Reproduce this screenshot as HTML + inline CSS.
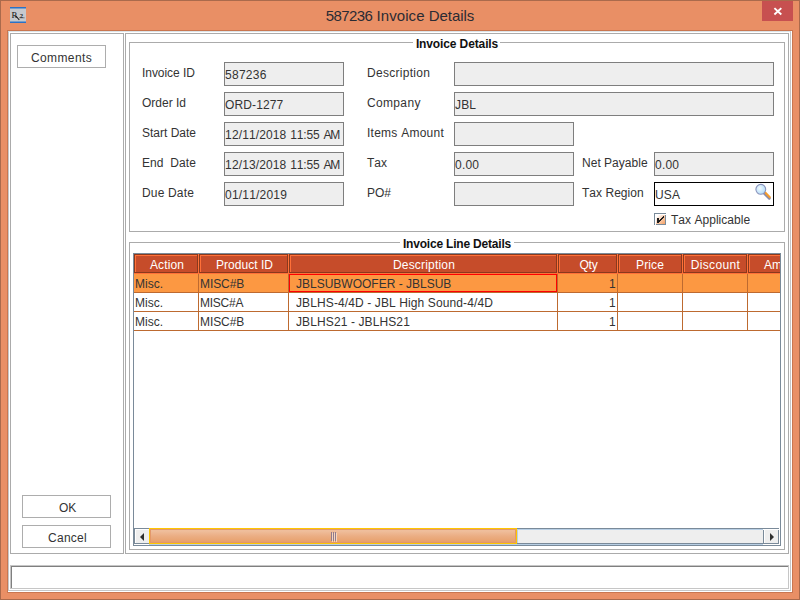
<!DOCTYPE html>
<html>
<head>
<meta charset="utf-8">
<title>587236 Invoice Details</title>
<style>
html,body{margin:0;padding:0;}
body{width:800px;height:600px;overflow:hidden;background:#E98F65;font-family:"Liberation Sans",Arial,sans-serif;font-size:12px;color:#333;position:relative;font-kerning:none;}
*{box-sizing:border-box;}
.abs{position:absolute;}
#win{position:absolute;left:0;top:0;width:800px;height:600px;border:1px solid #AA6A4C;background:#E98F65;}
#edge{position:absolute;left:7px;top:30px;width:786px;height:563px;background:#C97650;}
#content{position:absolute;left:8px;top:31px;width:784px;height:561px;background:#fff;}
#outerline{position:absolute;left:8px;top:31px;width:783px;height:560px;border:1px solid #C6C6C6;border-top-color:#DCE3E7;}
.panel{position:absolute;border:1px solid #ABABAB;background:#fff;}
.lbl{position:absolute;white-space:nowrap;line-height:14px;height:14px;color:#333;}
.fld{position:absolute;height:24px;border:1px solid #7E7E7E;background:#EEEEEE;white-space:nowrap;overflow:hidden;padding:0 0 0 0.1px;line-height:24px;color:#333;}
.btn{position:absolute;border:1px solid #ADADAD;background:#fff;text-align:center;white-space:nowrap;color:#333;}
.gtitle{position:absolute;background:#fff;font-weight:bold;color:#111;white-space:nowrap;line-height:14px;height:14px;text-align:center;}
#title{position:absolute;left:0;top:6px;width:800px;text-align:center;font-size:15px;letter-spacing:-0.2px;line-height:20px;color:#2B2B33;white-space:nowrap;}
#close{position:absolute;left:762px;top:1px;width:31px;height:20px;background:#C75050;}
/* table */
#sp{position:absolute;left:133px;top:253px;width:648px;height:293px;border:1px solid #7A8A99;background:#fff;overflow:hidden;}
.th{position:absolute;top:0;height:19px;background:#C64C2A;border:1px solid #8A391D;color:#fff;text-align:center;line-height:20px;padding-left:2px;white-space:nowrap;overflow:hidden;box-shadow:inset 1px 1px 0 #FF7038;}
.hl{position:absolute;background:#FF7038;}
.gl{position:absolute;background:#BD6A30;}
.td{position:absolute;height:18px;line-height:21px;white-space:nowrap;overflow:hidden;color:#333;}
</style>
</head>
<body>
<div id="win"></div>
<div id="edge"></div>
<div id="content"></div>
<div id="outerline"></div>

<!-- title bar -->
<svg class="abs" id="icon" style="left:10px;top:7px" width="16" height="16" viewBox="0 0 16 16">
  <rect x="0" y="0" width="16" height="16" fill="#C6C9CD"/>
  <rect x="0" y="0" width="16" height="1.5" fill="#2A72C6"/>
  <rect x="0" y="14.5" width="16" height="1.5" fill="#2A72C6"/>
  <text x="1.6" y="11.2" font-family="'Liberation Serif',serif" font-size="8.8" fill="#111">R</text>
  <path d="M5.6 8.6 L9.3 13" stroke="#1a1a1a" stroke-width="1.1" fill="none"/>
  <text x="9.8" y="10.6" font-family="'Liberation Serif',serif" font-size="6.6" font-weight="bold" fill="#111">2</text>
  <path d="M9.2 10.8 L14.6 10.8" stroke="#555" stroke-width="0.7" fill="none"/>
</svg>
<div id="title"><span style="letter-spacing:-0.6px">587236</span><span style="letter-spacing:0.08px"> Invoice</span><span style="letter-spacing:-0.05px"> Details</span></div>
<div id="close">
  <svg class="abs" style="left:0;top:0" width="31" height="20" viewBox="0 0 31 20"><path d="M12.4 7.1 L19.3 13.5 M19.3 7.1 L12.4 13.5" stroke="#fff" stroke-width="1.9" fill="none"/></svg>
</div>

<!-- left panel -->
<div class="panel" style="left:10px;top:33px;width:114px;height:521px;"></div>
<div class="btn" style="left:17px;top:45px;width:89px;height:23px;line-height:25px;letter-spacing:0.4px;">Comments</div>
<div class="btn" style="left:22px;top:495px;width:89px;height:23px;line-height:25px;padding-left:2px;letter-spacing:-0.17px;">OK</div>
<div class="btn" style="left:22px;top:525px;width:89px;height:23px;line-height:25px;padding-left:2px;letter-spacing:0.27px;">Cancel</div>

<!-- right panel -->
<div class="panel" style="left:125px;top:33px;width:664px;height:521px;"></div>

<!-- group 1 -->
<div class="panel" style="left:129px;top:42px;width:656px;height:190px;"></div>
<div class="gtitle" style="left:413px;top:37px;width:87px;letter-spacing:-0.12px;padding-left:1px;">Invoice Details</div>

<div class="lbl" style="left:142px;top:66px;letter-spacing:-0.05px;">Invoice ID</div>
<div class="lbl" style="left:142px;top:96px;">Order Id</div>
<div class="lbl" style="left:142px;top:126px;">Start Date</div>
<div class="lbl" style="left:142px;top:156px;letter-spacing:0.07px;">End&nbsp; Date</div>
<div class="lbl" style="left:142px;top:186px;letter-spacing:0.16px;">Due Date</div>

<div class="fld" style="left:224px;top:62px;width:120px;letter-spacing:0.25px;">587236</div>
<div class="fld" style="left:224px;top:92px;width:120px;letter-spacing:0.12px;">ORD-1277</div>
<div class="fld" style="left:224px;top:122px;width:120px;letter-spacing:0.12px;word-spacing:0.5px;">12/11/2018 <span style="letter-spacing:-0.15px">11:55</span> <span style="letter-spacing:-1.4px">AM</span></div>
<div class="fld" style="left:224px;top:152px;width:120px;letter-spacing:0.12px;word-spacing:0.5px;">12/13/2018 <span style="letter-spacing:-0.15px">11:55</span> <span style="letter-spacing:-1.4px">AM</span></div>
<div class="fld" style="left:224px;top:182px;width:120px;letter-spacing:0.19px;">01/11/2019</div>

<div class="lbl" style="left:367px;top:66px;letter-spacing:0.28px;">Description</div>
<div class="lbl" style="left:367px;top:96px;letter-spacing:0.34px;">Company</div>
<div class="lbl" style="left:367px;top:126px;letter-spacing:0.25px;">Items Amount</div>
<div class="lbl" style="left:367px;top:156px;">Tax</div>
<div class="lbl" style="left:367px;top:186px;">PO#</div>

<div class="fld" style="left:454px;top:62px;width:320px;"></div>
<div class="fld" style="left:454px;top:92px;width:320px;letter-spacing:0.11px;">JBL</div>
<div class="fld" style="left:454px;top:122px;width:120px;"></div>
<div class="fld" style="left:454px;top:152px;width:120px;letter-spacing:0.16px;">0.00</div>
<div class="fld" style="left:454px;top:182px;width:120px;"></div>

<div class="lbl" style="left:582px;top:156px;letter-spacing:0.02px;">Net Payable</div>
<div class="lbl" style="left:582px;top:186px;letter-spacing:0.03px;">Tax Region</div>
<div class="fld" style="left:654px;top:152px;width:120px;letter-spacing:0.16px;">0.00</div>
<div class="fld" style="left:654px;top:182px;width:120px;background:#fff;border-color:#000;letter-spacing:0.11px;">USA</div>
<svg class="abs" id="mag" style="left:754px;top:183px" width="18" height="18" viewBox="0 0 18 18">
  <defs><radialGradient id="lg" cx="0.4" cy="0.4" r="0.7"><stop offset="0" stop-color="#F4FBFF"/><stop offset="1" stop-color="#A9D8F7"/></radialGradient></defs>
  <path d="M10.3 10.2 L15.3 15.2" stroke="#8A8CA8" stroke-width="3" stroke-linecap="round"/>
  <path d="M11.2 9.6 L15.8 14.2" stroke="#F59C2C" stroke-width="2.1" stroke-linecap="round"/>
  <circle cx="6.8" cy="6.3" r="4.9" fill="url(#lg)" stroke="#8A93BC" stroke-width="1.1"/>
</svg>

<!-- checkbox -->
<svg class="abs" id="cb" style="left:654px;top:213px" width="13" height="13" viewBox="0 0 13 13" shape-rendering="crispEdges">
  <defs><linearGradient id="cbg" x1="0" y1="0" x2="1" y2="1"><stop offset="0.12" stop-color="#FFFFFF"/><stop offset="0.5" stop-color="#FACFB2"/><stop offset="1" stop-color="#F4A062"/></linearGradient></defs>
  <rect x="0" y="0" width="12" height="12" fill="#7A8A99"/>
  <rect x="1" y="1" width="10" height="10" fill="#FFFFFF"/>
  <rect x="2" y="2" width="9" height="9" fill="url(#cbg)"/>
  <rect x="11" y="1" width="1" height="1" fill="#fff"/><rect x="1" y="11" width="1" height="1" fill="#fff"/>
  <rect x="3" y="5" width="2" height="5" fill="#1E1E1E"/>
  <rect x="5" y="7" width="1" height="2" fill="#1E1E1E"/>
  <rect x="6" y="6" width="1" height="2" fill="#1E1E1E"/>
  <rect x="7" y="5" width="1" height="2" fill="#1E1E1E"/>
  <rect x="8" y="4" width="1" height="2" fill="#1E1E1E"/>
  <rect x="9" y="3" width="1" height="2" fill="#1E1E1E"/>
</svg>
<div class="lbl" style="left:671px;top:213px;margin-left:0;letter-spacing:0.03px;">Tax Applicable</div>

<!-- group 2 -->
<div class="panel" style="left:129px;top:242px;width:656px;height:308px;"></div>
<div class="gtitle" style="left:400px;top:237px;width:114px;letter-spacing:-0.2px;">Invoice Line Details</div>

<div id="sp">
  <!-- header: coordinates relative to sp inner (origin 134,254) -->
  <div class="abs" style="left:0;top:0;width:646px;height:20px;background:#FF7038;"></div>
  <div class="th" style="left:0px;width:64px;letter-spacing:0.11px;">Action</div>
  <div class="th" style="left:65px;width:89px;letter-spacing:0.03px;">Product ID</div>
  <div class="th" style="left:155px;width:268px;letter-spacing:0.18px;">Description</div>
  <div class="th" style="left:424px;width:59px;letter-spacing:-0.22px;">Qty</div>
  <div class="th" style="left:484px;width:64px;padding-left:0;letter-spacing:0.13px;">Price</div>
  <div class="th" style="left:549px;width:64px;padding-left:1px;letter-spacing:0.37px;">Discount</div>
  <div class="th" style="left:614px;width:72px;letter-spacing:0.11px;">Amount</div>

  <!-- selected row -->
  <div class="abs" style="left:0;top:20px;width:646px;height:18px;background:#FC9842;"></div>
  <!-- grid lines horizontal -->
  <div class="gl" style="left:0;top:38px;width:646px;height:1px;"></div>
  <div class="gl" style="left:0;top:57px;width:646px;height:1px;"></div>
  <div class="gl" style="left:0;top:76px;width:646px;height:1px;"></div>
  <!-- vertical -->
  <div class="gl" style="left:64px;top:20px;width:1px;height:57px;"></div>
  <div class="gl" style="left:154px;top:20px;width:1px;height:57px;"></div>
  <div class="gl" style="left:423px;top:20px;width:1px;height:57px;"></div>
  <div class="gl" style="left:483px;top:20px;width:1px;height:57px;"></div>
  <div class="gl" style="left:548px;top:20px;width:1px;height:57px;"></div>
  <div class="gl" style="left:613px;top:20px;width:1px;height:57px;"></div>

  <!-- focus cell -->
  <div class="abs" style="left:155px;top:20px;width:268px;height:18px;border:1px solid #F00;"></div>

  <div class="td" style="left:1px;top:20px;width:63px;">Misc.</div>
  <div class="td" style="left:66px;top:20px;width:88px;letter-spacing:-0.07px;">MISC#B</div>
  <div class="td" style="left:162px;top:20px;width:260px;">JBLSUBWOOFER - JBLSUB</div>
  <div class="td" style="left:424px;top:20px;width:58px;text-align:right;letter-spacing:0.33px;">1</div>

  <div class="td" style="left:1px;top:39px;width:63px;">Misc.</div>
  <div class="td" style="left:66px;top:39px;width:88px;letter-spacing:-0.25px;">MISC#A</div>
  <div class="td" style="left:162px;top:39px;width:260px;letter-spacing:0.11px;">JBLHS-4/4D - JBL High Sound-4/4D</div>
  <div class="td" style="left:424px;top:39px;width:58px;text-align:right;letter-spacing:0.33px;">1</div>

  <div class="td" style="left:1px;top:58px;width:63px;">Misc.</div>
  <div class="td" style="left:66px;top:58px;width:88px;letter-spacing:-0.07px;">MISC#B</div>
  <div class="td" style="left:162px;top:58px;width:260px;letter-spacing:0.11px;">JBLHS21 - JBLHS21</div>
  <div class="td" style="left:424px;top:58px;width:58px;text-align:right;letter-spacing:0.33px;">1</div>

  <!-- scrollbar: abs y=528..544 => rel 274..290 ; abs x=134..779 => rel 0..645 -->
  <div class="abs" id="sb" style="left:0;top:274px;width:646px;height:17px;background:#fff;">
    <!-- top line -->
    <div class="abs" style="left:0;top:0;width:645px;height:1px;background:#7A8A99;"></div>
    <!-- left button -->
    <div class="abs" style="left:0;top:0;width:1px;height:16px;background:#7A8A99;"></div>
    <div class="abs" style="left:2px;top:2px;width:13px;height:13px;background:#EEEEEE;"></div>
    <div class="abs" style="left:1px;top:15px;width:14px;height:1px;background:#7A8A99;"></div>
    <svg class="abs" style="left:5px;top:4px" width="6" height="10" viewBox="0 0 6 10"><path d="M5 1 L5 9 L1 5 Z" fill="#2E2E2E"/></svg>
    <!-- track -->
    <div class="abs" style="left:383px;top:1px;width:246px;height:16px;background:#B8CFE5;"></div>
    <div class="abs" style="left:384px;top:2px;width:245px;height:13px;background:#EEEEEE;"></div>
    <div class="abs" style="left:383px;top:15px;width:246px;height:1px;background:#7A8A99;"></div>
    <!-- thumb -->
    <div class="abs" style="left:15px;top:16px;width:615px;height:1px;background:#B8CFE5;"></div>
    <div class="abs" id="thumb" style="left:15px;top:0;width:368px;height:16px;border:1px solid #FFC500;box-shadow:inset 0 0 0 1px #E3986A;background:linear-gradient(#EFBE9C 0,#EFBE9C 2px,#EBAE84 7px,#E8A06C 13px,#E79C66 14px);"></div>
    <div class="abs" style="left:197px;top:4px;width:1px;height:9px;background:#8F7B8C;"></div>
    <div class="abs" style="left:198px;top:5px;width:1px;height:9px;background:#F7D6BD;"></div>
    <div class="abs" style="left:199px;top:4px;width:1px;height:9px;background:#8F7B8C;"></div>
    <div class="abs" style="left:200px;top:5px;width:1px;height:9px;background:#F7D6BD;"></div>
    <div class="abs" style="left:201px;top:4px;width:1px;height:9px;background:#8F7B8C;"></div>
    <div class="abs" style="left:202px;top:5px;width:1px;height:9px;background:#F7D6BD;"></div>
    <!-- right button -->
    <div class="abs" style="left:629px;top:1px;width:17px;height:16px;background:#fff;"></div>
    <div class="abs" style="left:629px;top:2px;width:16px;height:14px;border:1px solid #7A8A99;border-top:none;"></div>
    <div class="abs" style="left:631px;top:2px;width:13px;height:13px;background:#EEEEEE;"></div>
    <svg class="abs" style="left:635px;top:4px" width="6" height="10" viewBox="0 0 6 10"><path d="M1 1 L1 9 L5 5 Z" fill="#2E2E2E"/></svg>
  </div>
</div>

<!-- status bar -->
<div class="abs" style="left:10px;top:565px;width:779px;height:24px;background:#fff;border:1px solid #C6C6C6;"></div>
<div class="abs" style="left:11px;top:566px;width:777px;height:22px;border-top:1px solid #7F7F7F;border-left:1px solid #7F7F7F;"></div>

</body>
</html>
